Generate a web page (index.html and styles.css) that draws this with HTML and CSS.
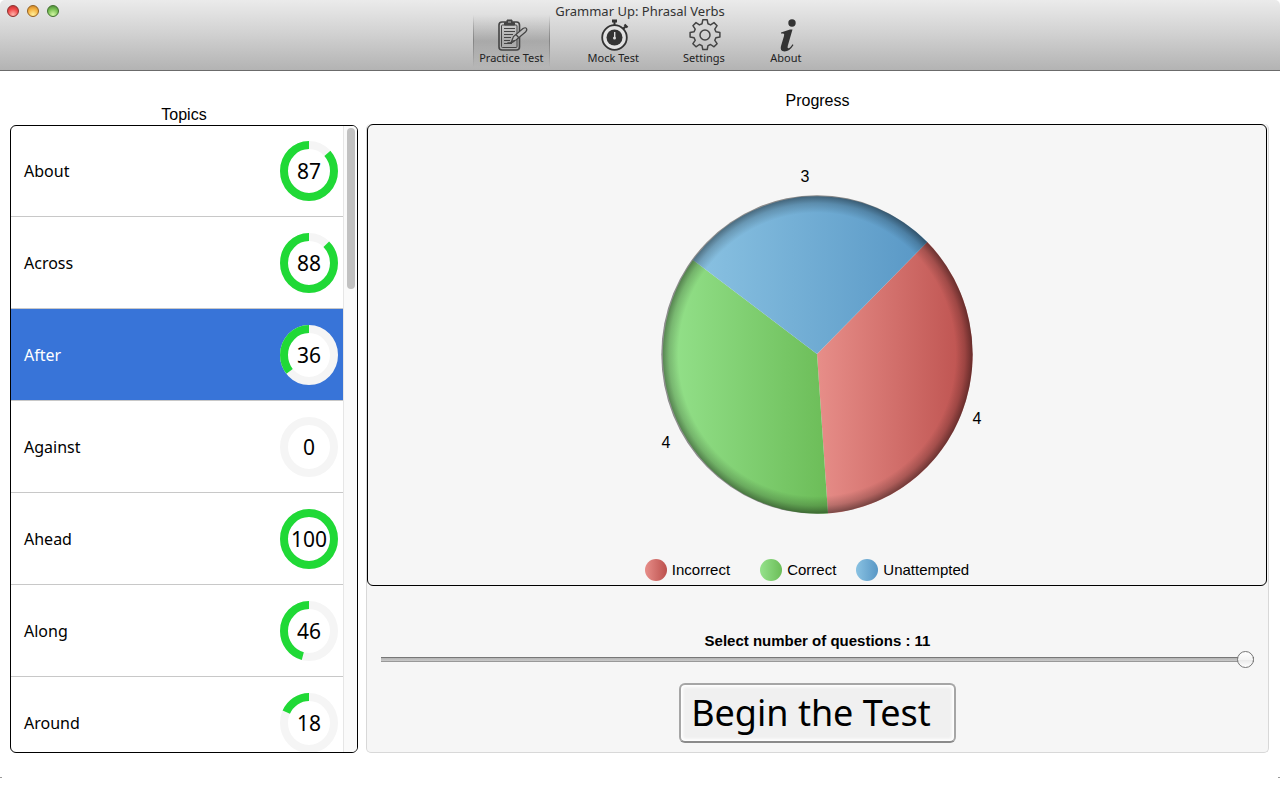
FILE: index.html
```html
<!DOCTYPE html>
<html lang="en">
<head>
<meta charset="utf-8">
<meta name="viewport" content="width=device-width, initial-scale=1">
<title>Grammar Up: Phrasal Verbs</title>
<link rel="stylesheet" href="styles.css">
</head>
<body>
<div class="window">
  <header class="titlebar">
    <div class="lights">
      <button class="light light-close" aria-label="Close"></button>
      <button class="light light-minimize" aria-label="Minimize"></button>
      <button class="light light-zoom" aria-label="Zoom"></button>
    </div>
    <h1 class="title">Grammar Up: Phrasal Verbs</h1>
    <nav class="toolbar">
      <button class="tool tool-active">
        <svg class="tool-icon" viewBox="0 0 34 34" fill="none" stroke="#444">
          <rect x="5" y="4" width="20.500" height="28" rx="3" stroke-width="1.6"/>
          <rect x="7.500" y="7" width="15.500" height="22.500" rx="1" stroke-width="1"/>
          <path d="M10.500 4.500h2.500V2h5v2.500h2.500V7h-10z" fill="#444"/>
          <path d="M14 4h3" stroke="#bbb"/>
          <path d="M10 10.500h11M10 13.500h11M10 16.500h9M10 19.500h7M10 22.500h6M10 25.500h8" stroke-width="1.100"/>
          <path d="M17.500 23.500l2-5 9.500-8q2.500-1.500 3.500 0t-1 3.500l-9.500 8z" fill="#bdbdbd" stroke-width="1.200"/>
          <path d="M22 16.500l3 3.500M13.500 24.500q4 1 7-1.500" stroke-width="1.200"/>
        </svg>
        <span>Practice Test</span>
      </button>
      <button class="tool">
        <svg class="tool-icon" viewBox="-1 0 34 34" fill="none" stroke="#333">
          <circle cx="17.500" cy="19.500" r="12.300" stroke-width="1.800" fill="#e2e2e2"/>
          <circle cx="17.500" cy="19.500" r="8" fill="#333" stroke="none"/>
          <path d="M15 1.500h5v3h-1.500V8h-2V4.500H15z" fill="#333" stroke="none"/>
          <path d="M26 11l3-3M27.500 6.500l3 3" stroke-width="2.200"/>
          <path d="M17.700 14v5" stroke="#ddd" stroke-width="1.400"/>
          <circle cx="17.500" cy="20" r="1.500" fill="#ddd" stroke="none"/>
        </svg>
        <span>Mock Test</span>
      </button>
      <button class="tool">
        <svg class="tool-icon" viewBox="0 0 34 34" fill="none" stroke="#444" stroke-width="1.500" stroke-linejoin="round">
          <circle cx="18" cy="17" r="5"/>
          <path d="M15.800 1.800h4.400l.8 4 2.600 1.100 3.400-2.300 3.100 3.100-2.300 3.400 1.100 2.600 4 .8v4.400l-4 .8-1.100 2.600 2.300 3.400-3.100 3.100-3.400-2.300-2.600 1.100-.8 4h-4.400l-.8-4-2.600-1.100-3.400 2.300-3.100-3.100 2.300-3.400-1.100-2.600-4-.8v-4.400l4-.8 1.100-2.600-2.300-3.400 3.100-3.100 3.400 2.300 2.600-1.100z"/>
        </svg>
        <span>Settings</span>
      </button>
      <button class="tool">
        <svg class="tool-icon" viewBox="0 0 34 34" fill="#333">
          <circle cx="23" cy="5" r="3.700"/>
          <path d="M12 14.500l9-3h2.500L19 27q-1 3.500.5 3.200 1.500-.2 4-4l1 .7q-4 6.500-9 6.500-5-.2-3.500-5.500l3-10q.7-2.400-.7-2.500l-2.300.1z"/>
        </svg>
        <span>About</span>
      </button>
    </nav>
  </header>

  <main class="content">
    <section class="topics">
      <h2 class="heading">Topics</h2>
      <div class="topic-box">
        <ul class="topic-list">
          <li><button class="topic">About
            <svg class="ring" viewBox="0 0 58 60"><ellipse class="ring-track" cx="29" cy="30" rx="25" ry="26"/><path class="ring-value" pathLength="100" style="stroke-dasharray:87 200" d="M29 4A25 26 0 0 0 29 56A25 26 0 0 0 29 4"/><text x="29" y="38">87</text></svg></button></li>
          <li><button class="topic">Across
            <svg class="ring" viewBox="0 0 58 60"><ellipse class="ring-track" cx="29" cy="30" rx="25" ry="26"/><path class="ring-value" pathLength="100" style="stroke-dasharray:88 200" d="M29 4A25 26 0 0 0 29 56A25 26 0 0 0 29 4"/><text x="29" y="38">88</text></svg></button></li>
          <li><button class="topic topic-selected" aria-current="true">After
            <svg class="ring" viewBox="0 0 58 60"><ellipse class="ring-track" cx="29" cy="30" rx="25" ry="26"/><path class="ring-value" pathLength="100" style="stroke-dasharray:36 200" d="M29 4A25 26 0 0 0 29 56A25 26 0 0 0 29 4"/><text x="29" y="38">36</text></svg></button></li>
          <li><button class="topic">Against
            <svg class="ring" viewBox="0 0 58 60"><ellipse class="ring-track" cx="29" cy="30" rx="25" ry="26"/><text x="29" y="38">0</text></svg></button></li>
          <li><button class="topic">Ahead
            <svg class="ring" viewBox="0 0 58 60"><ellipse class="ring-track" cx="29" cy="30" rx="25" ry="26"/><path class="ring-value" pathLength="100" style="stroke-dasharray:100 200" d="M29 4A25 26 0 0 0 29 56A25 26 0 0 0 29 4"/><text x="29" y="38">100</text></svg></button></li>
          <li><button class="topic">Along
            <svg class="ring" viewBox="0 0 58 60"><ellipse class="ring-track" cx="29" cy="30" rx="25" ry="26"/><path class="ring-value" pathLength="100" style="stroke-dasharray:46 200" d="M29 4A25 26 0 0 0 29 56A25 26 0 0 0 29 4"/><text x="29" y="38">46</text></svg></button></li>
          <li><button class="topic">Around
            <svg class="ring" viewBox="0 0 58 60"><ellipse class="ring-track" cx="29" cy="30" rx="25" ry="26"/><path class="ring-value" pathLength="100" style="stroke-dasharray:18 200" d="M29 4A25 26 0 0 0 29 56A25 26 0 0 0 29 4"/><text x="29" y="38">18</text></svg></button></li>
        </ul>
        <div class="scroll-track"><div class="scroll-thumb"></div></div>
      </div>
    </section>

    <section class="progress">
      <h2 class="heading">Progress</h2>
      <div class="panel">
        <div class="chart-box">
          <svg class="chart" viewBox="646 160 342 360" role="img" aria-label="4 incorrect, 4 correct, 3 unattempted">
            <defs>
              <linearGradient id="red"><stop offset="0" stop-color="#e78e89"/><stop offset="1" stop-color="#bc504d"/></linearGradient>
              <linearGradient id="green"><stop offset="0" stop-color="#95e28c"/><stop offset="1" stop-color="#6cbd58"/></linearGradient>
              <linearGradient id="blue"><stop offset="0" stop-color="#8ac2e2"/><stop offset="1" stop-color="#5897c5"/></linearGradient>
              <radialGradient id="shade"><stop offset=".89" stop-color="#000" stop-opacity="0"/><stop offset=".95" stop-color="#000" stop-opacity=".18"/><stop offset="1" stop-color="#000" stop-opacity=".46"/></radialGradient>
            </defs>
            <path fill="url(#red)" d="M817 354L927.300 242A156 159.500 0 0 1 828 513.500z"/>
            <path fill="url(#green)" d="M817 354L828 513.500A156 159.500 0 0 1 693 260z"/>
            <path fill="url(#blue)" d="M817 354L693 260A156 159.500 0 0 1 927.300 242z"/>
            <ellipse cx="817" cy="354.500" rx="155.700" ry="159.200" fill="url(#shade)"/>
            <text x="805" y="182">3</text>
            <text x="666" y="448">4</text>
            <text x="977" y="424">4</text>
          </svg>
          <ul class="legend">
            <li><span class="dot dot-red"></span>Incorrect</li>
            <li><span class="dot dot-green"></span>Correct</li>
            <li><span class="dot dot-blue"></span>Unattempted</li>
          </ul>
        </div>
        <form class="controls">
          <label class="count" for="questions">Select number of questions : 11</label>
          <input class="slider" id="questions" type="range" min="1" max="11" value="11">
          <button class="begin" type="button">Begin the Test</button>
        </form>
      </div>
    </section>
  </main>
</div>
</body>
</html>
```
FILE: styles.css
```css
* { box-sizing: border-box; }

body {
  margin: 0;
  background: #fff;
  color: #000;
  font-family: "Liberation Sans", Arial, sans-serif;
  font-size: 16px;
}

button {
  margin: 0;
  padding: 0;
  border: 0;
  background: none;
  color: inherit;
  font: inherit;
}

ul { margin: 0; padding: 0; list-style: none; }

.window {
  display: flex;
  flex-direction: column;
  height: calc(100vh - 22px);
  min-height: 640px;
  background:
    linear-gradient(#999, #999) left bottom / 2px 1px no-repeat,
    linear-gradient(#999, #999) right bottom / 2px 1px no-repeat,
    #fff;
}

/* Title bar and toolbar */
.titlebar {
  display: grid;
  grid-template-columns: 1fr auto 1fr;
  grid-template-rows: 15px 55px;
  border-bottom: 1px solid #6b6b6b;
  border-radius: 5px 5px 0 0;
  background: linear-gradient(#ebebeb, #d3d3d3 45%, #b3b3b3);
  font-family: "Noto Sans", sans-serif;
}

.lights { display: flex; gap: 8px; padding: 5px 0 0 7px; }

.light {
  width: 12px;
  height: 12px;
  border: 1px solid #8b2f2c;
  border-radius: 50%;
  background: radial-gradient(circle at 50% 85%, #ffb3ab, #f0494a 55%, #b92b2c);
}
.light-minimize {
  border-color: #94601f;
  background: radial-gradient(circle at 50% 85%, #fff09a, #f5b342 55%, #c47a22);
}
.light-zoom {
  border-color: #40702f;
  background: radial-gradient(circle at 50% 85%, #d2f7a3, #79c054 55%, #437f33);
}

.title {
  margin: 0;
  color: #333;
  font-size: 13px;
  font-weight: 400;
  line-height: 22px;
}

.toolbar {
  grid-column: 1 / -1;
  display: flex;
  justify-content: center;
  gap: 32px;
  padding-left: 2px;
}

.tool {
  display: flex;
  flex-direction: column;
  align-items: center;
  height: 52px;
  padding: 3px 6px 0;
  color: #222;
  font-size: 11px;
  line-height: 12px;
}
.tool-active {
  background:
    linear-gradient(transparent, #858585 50%, transparent) left / 1px 100% no-repeat,
    linear-gradient(transparent, #858585 50%, transparent) right / 1px 100% no-repeat,
    linear-gradient(rgba(0, 0, 0, 0), rgba(0, 0, 0, .17) 50%, rgba(0, 0, 0, 0));
}
.tool-icon { width: 34px; height: 34px; flex: none; overflow: visible; }

/* Main columns */
.content {
  display: grid;
  flex: 1;
  grid-template-columns: minmax(0, 348fr) minmax(0, 903fr);
  gap: 8px;
  min-height: 0;
  padding: 0 11px 25px 10px;
}

.heading {
  margin: 0;
  font-size: 16px;
  font-weight: 400;
  line-height: 20px;
  text-align: center;
}

.topics, .progress { display: flex; flex-direction: column; min-height: 0; }
.topics { padding-top: 34px; }
.progress { padding-top: 20px; }
.progress .heading { margin-bottom: 13px; }

.topic-box {
  display: flex;
  flex: 1;
  min-height: 0;
  overflow: hidden;
  border: 1px solid #000;
  border-radius: 6px;
}
.topic-list { flex: 1; }

.topic {
  display: flex;
  align-items: center;
  justify-content: space-between;
  width: 100%;
  height: 92px;
  padding: 0 5px 0 13px;
  border-bottom: 1px solid #c8c8c8;
  font-family: "Noto Sans", sans-serif;
  font-size: 16px;
}
li:first-child .topic { height: 91px; }
.topic-selected { background: #3874d8; color: #fff; }

.ring { width: 58px; height: 60px; flex: none; }
.ring-track { fill: #fff; stroke: #f5f5f5; stroke-width: 8px; }
.ring-value { fill: none; stroke: #20d936; stroke-width: 8px; }
.ring text { fill: #000; font-size: 21px; text-anchor: middle; }

.scroll-track {
  width: 14px;
  padding: 2px 2px 0 3px;
  border-left: 1px solid #e6e6e6;
  background: #fafafa;
}
.scroll-thumb { height: 161px; border-radius: 4px; background: #c1c1c1; }

/* Progress panel */
.panel {
  display: flex;
  flex: 1;
  flex-direction: column;
  min-height: 0;
  border: 1px solid #d8d8d8;
  border-top: 0;
  border-radius: 5px;
  background: #f6f6f6;
}

.chart-box {
  display: flex;
  flex: 1;
  flex-direction: column;
  align-items: center;
  justify-content: space-between;
  min-height: 0;
  margin-right: 1px;
  padding: 35px 0 4px;
  border: 1px solid #000;
  border-radius: 6px;
}
.chart { flex: 0 1 360px; width: 342px; max-width: 100%; min-height: 0; }
.chart text { font-size: 16px; text-anchor: middle; }

.legend { display: flex; font-size: 15px; line-height: 22px; }
.legend li { display: flex; gap: 5px; margin-right: 20px; }
.legend li:first-child { margin-right: 30px; }
.dot { width: 22px; height: 22px; border-radius: 50%; }
.dot-red { background: linear-gradient(90deg, #e78e89, #bc504d); }
.dot-green { background: linear-gradient(90deg, #95e28c, #6cbd58); }
.dot-blue { background: linear-gradient(90deg, #8ac2e2, #5897c5); }

.controls {
  display: flex;
  flex-direction: column;
  align-items: center;
  padding: 45px 14px 9px;
}
.count { font-size: 15px; font-weight: 700; line-height: 20px; }

.slider {
  -webkit-appearance: none;
  appearance: none;
  width: 100%;
  height: 17px;
  margin: 0 0 15px;
  background: linear-gradient(#777 1px, #b4b4b4 1px, #cacaca 4px, #999 4px) center / 100% 5px no-repeat;
}
.slider::-webkit-slider-thumb {
  -webkit-appearance: none;
  width: 17px;
  height: 17px;
  border: 1px solid #777;
  border-radius: 50%;
  background: linear-gradient(#fff, #f4f4f4 50%, #e8e8e8 51%, #fff);
}

.begin {
  height: 60px;
  padding: 0 23px 0 10px;
  border: 2px solid #a6a6a6;
  border-bottom-color: #8b8b8b;
  border-radius: 6px;
  background: #f0f0f0;
  box-shadow: inset 0 0 3px 2px #fff;
  font-family: "Noto Sans", sans-serif;
  font-size: 36px;
  line-height: 54px;
}
```
